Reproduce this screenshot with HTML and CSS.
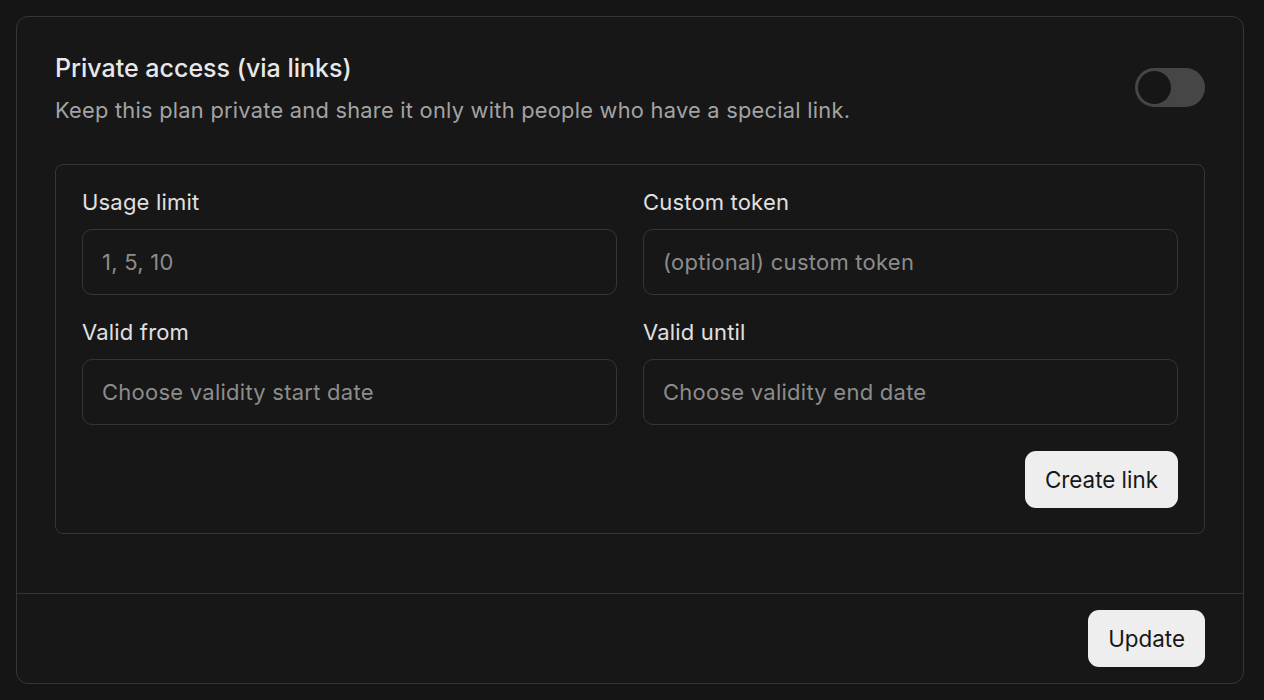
FILE: index.html
```html
<!DOCTYPE html>
<html>
<head>
<meta charset="utf-8">
<link rel="stylesheet" href="styles.css">
</head>
<body>
<div class="card">
  <div class="section">
    <div class="head">
      <div class="head-text">
        <h2 class="title">Private access (via links)</h2>
        <p class="desc">Keep this plan private and share it only with people who have a special link.</p>
      </div>
      <div class="toggle"><span class="knob"></span></div>
    </div>
    <div class="box">
      <div class="grid">
        <div class="field">
          <label class="label">Usage limit</label>
          <div class="input placeholder">1, 5, 10</div>
        </div>
        <div class="field">
          <label class="label">Custom token</label>
          <div class="input placeholder">(optional) custom token</div>
        </div>
        <div class="field">
          <label class="label">Valid from</label>
          <div class="input placeholder">Choose validity start date</div>
        </div>
        <div class="field">
          <label class="label">Valid until</label>
          <div class="input placeholder">Choose validity end date</div>
        </div>
      </div>
      <div class="actions">
        <button class="btn">Create link</button>
      </div>
    </div>
  </div>
  <div class="footer">
    <button class="btn">Update</button>
  </div>
</div>
</body>
</html>
```

FILE: styles.css
```css
* { box-sizing: border-box; }
html, body {
  margin: 0;
  padding: 0;
  background: #151515;
  font-family: Inter, "Noto Sans", sans-serif;
  color: #e6e6e6;
}
body { padding: 16px 20px 16px 16px; }
.card {
  width: 1228px;
  border: 1px solid #353535;
  border-radius: 12px;
  background: #171717;
}
.section {
  padding: 36px 38px 59px 38px;
}
.head {
  display: flex;
  justify-content: space-between;
  align-items: flex-start;
}
.title {
  margin: 0;
  font-size: 25px;
  line-height: 30px;
  font-weight: 500;
  color: #e8e8e8;
}
.desc {
  margin: 12px 0 0 0;
  font-size: 21.8px;
  line-height: 30px;
  color: #a3a3a3;
  letter-spacing: 0.26px;
}
.toggle {
  margin-top: 15px;
  width: 70px;
  height: 39px;
  border-radius: 20px;
  background: #464646;
  padding: 2px 3px;
  display: flex;
  align-items: center;
}
.knob {
  width: 33px;
  height: 33px;
  border-radius: 50%;
  background: #161616;
}
.box {
  margin-top: 39px;
  border: 1px solid #353535;
  border-radius: 8px;
  padding: 22px 26px 25px 26px;
}
.grid {
  display: grid;
  grid-template-columns: 1fr 1fr;
  column-gap: 26px;
  row-gap: 22px;
}
.field {
  display: flex;
  flex-direction: column;
  gap: 12px;
}
.label {
  font-size: 22px;
  line-height: 30px;
  color: #e0e0e0;
  letter-spacing: 0.18px;
}
.input {
  height: 66px;
  border: 1px solid #353535;
  border-radius: 10px;
  padding: 0 19px;
  display: flex;
  align-items: center;
  font-size: 22px;
  letter-spacing: 0.25px;
}
.placeholder { color: #8c8c8c; }
.actions {
  margin-top: 26px;
  display: flex;
  justify-content: flex-end;
}
.btn {
  font-family: Inter, "Noto Sans", sans-serif;
  height: 57px;
  padding: 0 20px;
  border: none;
  border-radius: 11px;
  background: #eeeeee;
  color: #171717;
  font-size: 22.4px;
}
.footer {
  border-top: 1px solid #353535;
  padding: 16px 38px 16px 38px;
  display: flex;
  justify-content: flex-end;
}
```
